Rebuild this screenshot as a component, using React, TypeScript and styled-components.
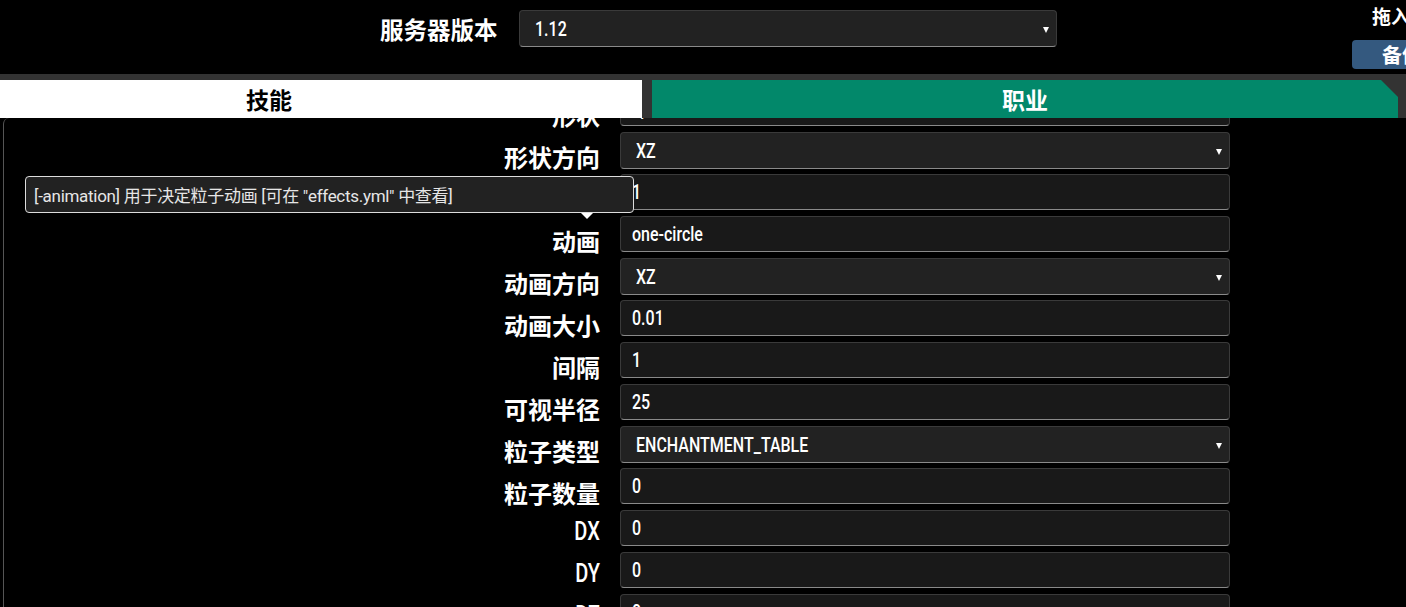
import React from "react";
import styled, { createGlobalStyle } from "styled-components";

const GlobalStyle = createGlobalStyle`
  html, body {
    margin: 0;
    background: #000;
    overflow: hidden;
  }
  body {
    font-family: "Roboto", "Noto Sans CJK SC", sans-serif;
    color: #fff;
  }
`;

const Page = styled.div`
  width: 1406px;
  height: 607px;
  overflow: hidden;
  background: #000;
`;

const TopBar = styled.div`
  height: 74px;
  display: flex;
  align-items: flex-start;
`;

const VersionGroup = styled.div`
  display: flex;
  align-items: center;
  margin-left: 380px;
  margin-top: 10px;
  gap: 21px;
`;

const BoldLabel = styled.div`
  font-family: "Noto Sans CJK SC", sans-serif;
  font-weight: 700;
  font-size: 23.5px;
  color: #fff;
  white-space: nowrap;
`;

const SideTools = styled.div`
  margin-left: auto;
  width: 54px;
  display: flex;
  flex-direction: column;
  align-items: flex-start;
  white-space: nowrap;
  overflow: hidden;
`;

const DropText = styled.div`
  font-family: "Noto Sans CJK SC", sans-serif;
  font-weight: 700;
  font-size: 19px;
  line-height: 20px;
  margin: 6px 0 0 20px;
`;

const BackupButton = styled.div`
  margin-top: 14px;
  height: 29px;
  width: 120px;
  background: #34597f;
  border-radius: 4px;
  font-family: "Noto Sans CJK SC", sans-serif;
  font-weight: 700;
  font-size: 20px;
  line-height: 29px;
  padding-left: 30px;
  box-sizing: border-box;
`;

const Field = styled.div<{ $select?: boolean }>`
  box-sizing: border-box;
  height: ${(p) => (p.$select ? 37 : 36)}px;
  display: flex;
  align-items: center;
  justify-content: space-between;
  padding: 0 7px 0 ${(p) => (p.$select ? 15 : 11)}px;
  background: ${(p) => (p.$select ? "#222" : "#191919")};
  border: 1px solid #3a3a3a;
  border-bottom-color: #8a8a8a;
  border-radius: 4px;
  font-size: 20px;
  font-weight: 500;
  color: #fff;
  white-space: nowrap;
`;

/* condensed look of the original UI font */
const Narrow = styled.span<{ $origin?: string }>`
  display: inline-block;
  transform: scaleX(0.8);
  transform-origin: ${(p) => p.$origin || "left"} center;
`;

const VersionSelect = styled(Field)`
  width: 538px;
`;

const Caret = styled.span`
  width: 0;
  height: 0;
  border-left: 3px solid transparent;
  border-right: 3px solid transparent;
  border-top: 6px solid #fff;
  margin-top: 2px;
`;

const TabStrip = styled.div`
  background: #333;
  height: 44px;
  box-sizing: border-box;
  padding-top: 6px;
  display: flex;
  gap: 10px;
  margin-left: -104px;
`;

const Tab = styled.div<{ $active?: boolean }>`
  width: 746px;
  height: 38px;
  display: flex;
  align-items: center;
  justify-content: center;
  font-family: "Noto Sans CJK SC", sans-serif;
  font-weight: 700;
  font-size: 23px;
  background: ${(p) => (p.$active ? "#fff" : "#02886a")};
  color: ${(p) => (p.$active ? "#000" : "#fff")};
  clip-path: ${(p) =>
    p.$active ? "none" : "polygon(0 0, 729px 0, 100% 17px, 100% 100%, 0 100%)"};
`;

const Content = styled.div`
  position: relative;
  height: 489px;
  margin-left: 3px;
  border-left: 1px solid #555;
  border-top-left-radius: 6px;
  overflow: hidden;
`;

const Form = styled.div`
  margin-top: -28px;
  display: grid;
  grid-template-columns: 596px 610px;
  column-gap: 20px;
  row-gap: 5px;
`;

const RowLabel = styled.div`
  height: 37px;
  display: flex;
  align-items: flex-end;
  justify-content: flex-end;
  font-family: "Noto Sans CJK SC", sans-serif;
  font-weight: 700;
  font-size: 24px;
  line-height: 1;
  color: #fff;
`;

const LatinLabel = styled(RowLabel)`
  font-family: "Roboto", sans-serif;
  font-weight: 500;
  font-size: 25px;
  padding-bottom: 3px;
  box-sizing: border-box;
`;

const Tooltip = styled.div`
  position: absolute;
  left: 21px;
  top: 58px;
  width: 609px;
  height: 37px;
  box-sizing: border-box;
  background: #222;
  border: 1px solid #ddd;
  border-radius: 4px;
  padding-left: 8px;
  display: flex;
  align-items: center;
  font-size: 17px;
  letter-spacing: -0.3px;
  color: #e6e6e6;
  white-space: nowrap;

  &::after {
    content: "";
    position: absolute;
    left: 555px;
    bottom: -7px;
    border-left: 6px solid transparent;
    border-right: 6px solid transparent;
    border-top: 6px solid #fff;
  }
`;

type Row = { label: string; value: string; select?: boolean; latin?: boolean };

const rows: Row[] = [
  { label: "形状", value: "sphere" },
  { label: "形状方向", value: "XZ", select: true },
  { label: "形状大小", value: "1" },
  { label: "动画", value: "one-circle" },
  { label: "动画方向", value: "XZ", select: true },
  { label: "动画大小", value: "0.01" },
  { label: "间隔", value: "1" },
  { label: "可视半径", value: "25" },
  { label: "粒子类型", value: "ENCHANTMENT_TABLE", select: true },
  { label: "粒子数量", value: "0" },
  { label: "DX", value: "0", latin: true },
  { label: "DY", value: "0", latin: true },
  { label: "DZ", value: "0", latin: true },
];

export default function App() {
  return (
    <Page>
      <GlobalStyle />
      <TopBar>
        <VersionGroup>
          <BoldLabel>服务器版本</BoldLabel>
          <VersionSelect $select>
            <Narrow>1.12</Narrow>
            <Caret />
          </VersionSelect>
        </VersionGroup>
        <SideTools>
          <DropText>拖入文件</DropText>
          <BackupButton>备份</BackupButton>
        </SideTools>
      </TopBar>
      <TabStrip>
        <Tab $active>技能</Tab>
        <Tab>职业</Tab>
      </TabStrip>
      <Content>
        <Form>
          {rows.map((r) => (
            <React.Fragment key={r.label}>
              {r.latin ? (
                <LatinLabel>
                  <Narrow $origin="right">{r.label}</Narrow>
                </LatinLabel>
              ) : (
                <RowLabel>{r.label}</RowLabel>
              )}
              <Field $select={r.select}>
                <Narrow>{r.value}</Narrow>
                {r.select && <Caret />}
              </Field>
            </React.Fragment>
          ))}
        </Form>
        <Tooltip>[-animation] 用于决定粒子动画 [可在 "effects.yml" 中查看]</Tooltip>
      </Content>
    </Page>
  );
}
